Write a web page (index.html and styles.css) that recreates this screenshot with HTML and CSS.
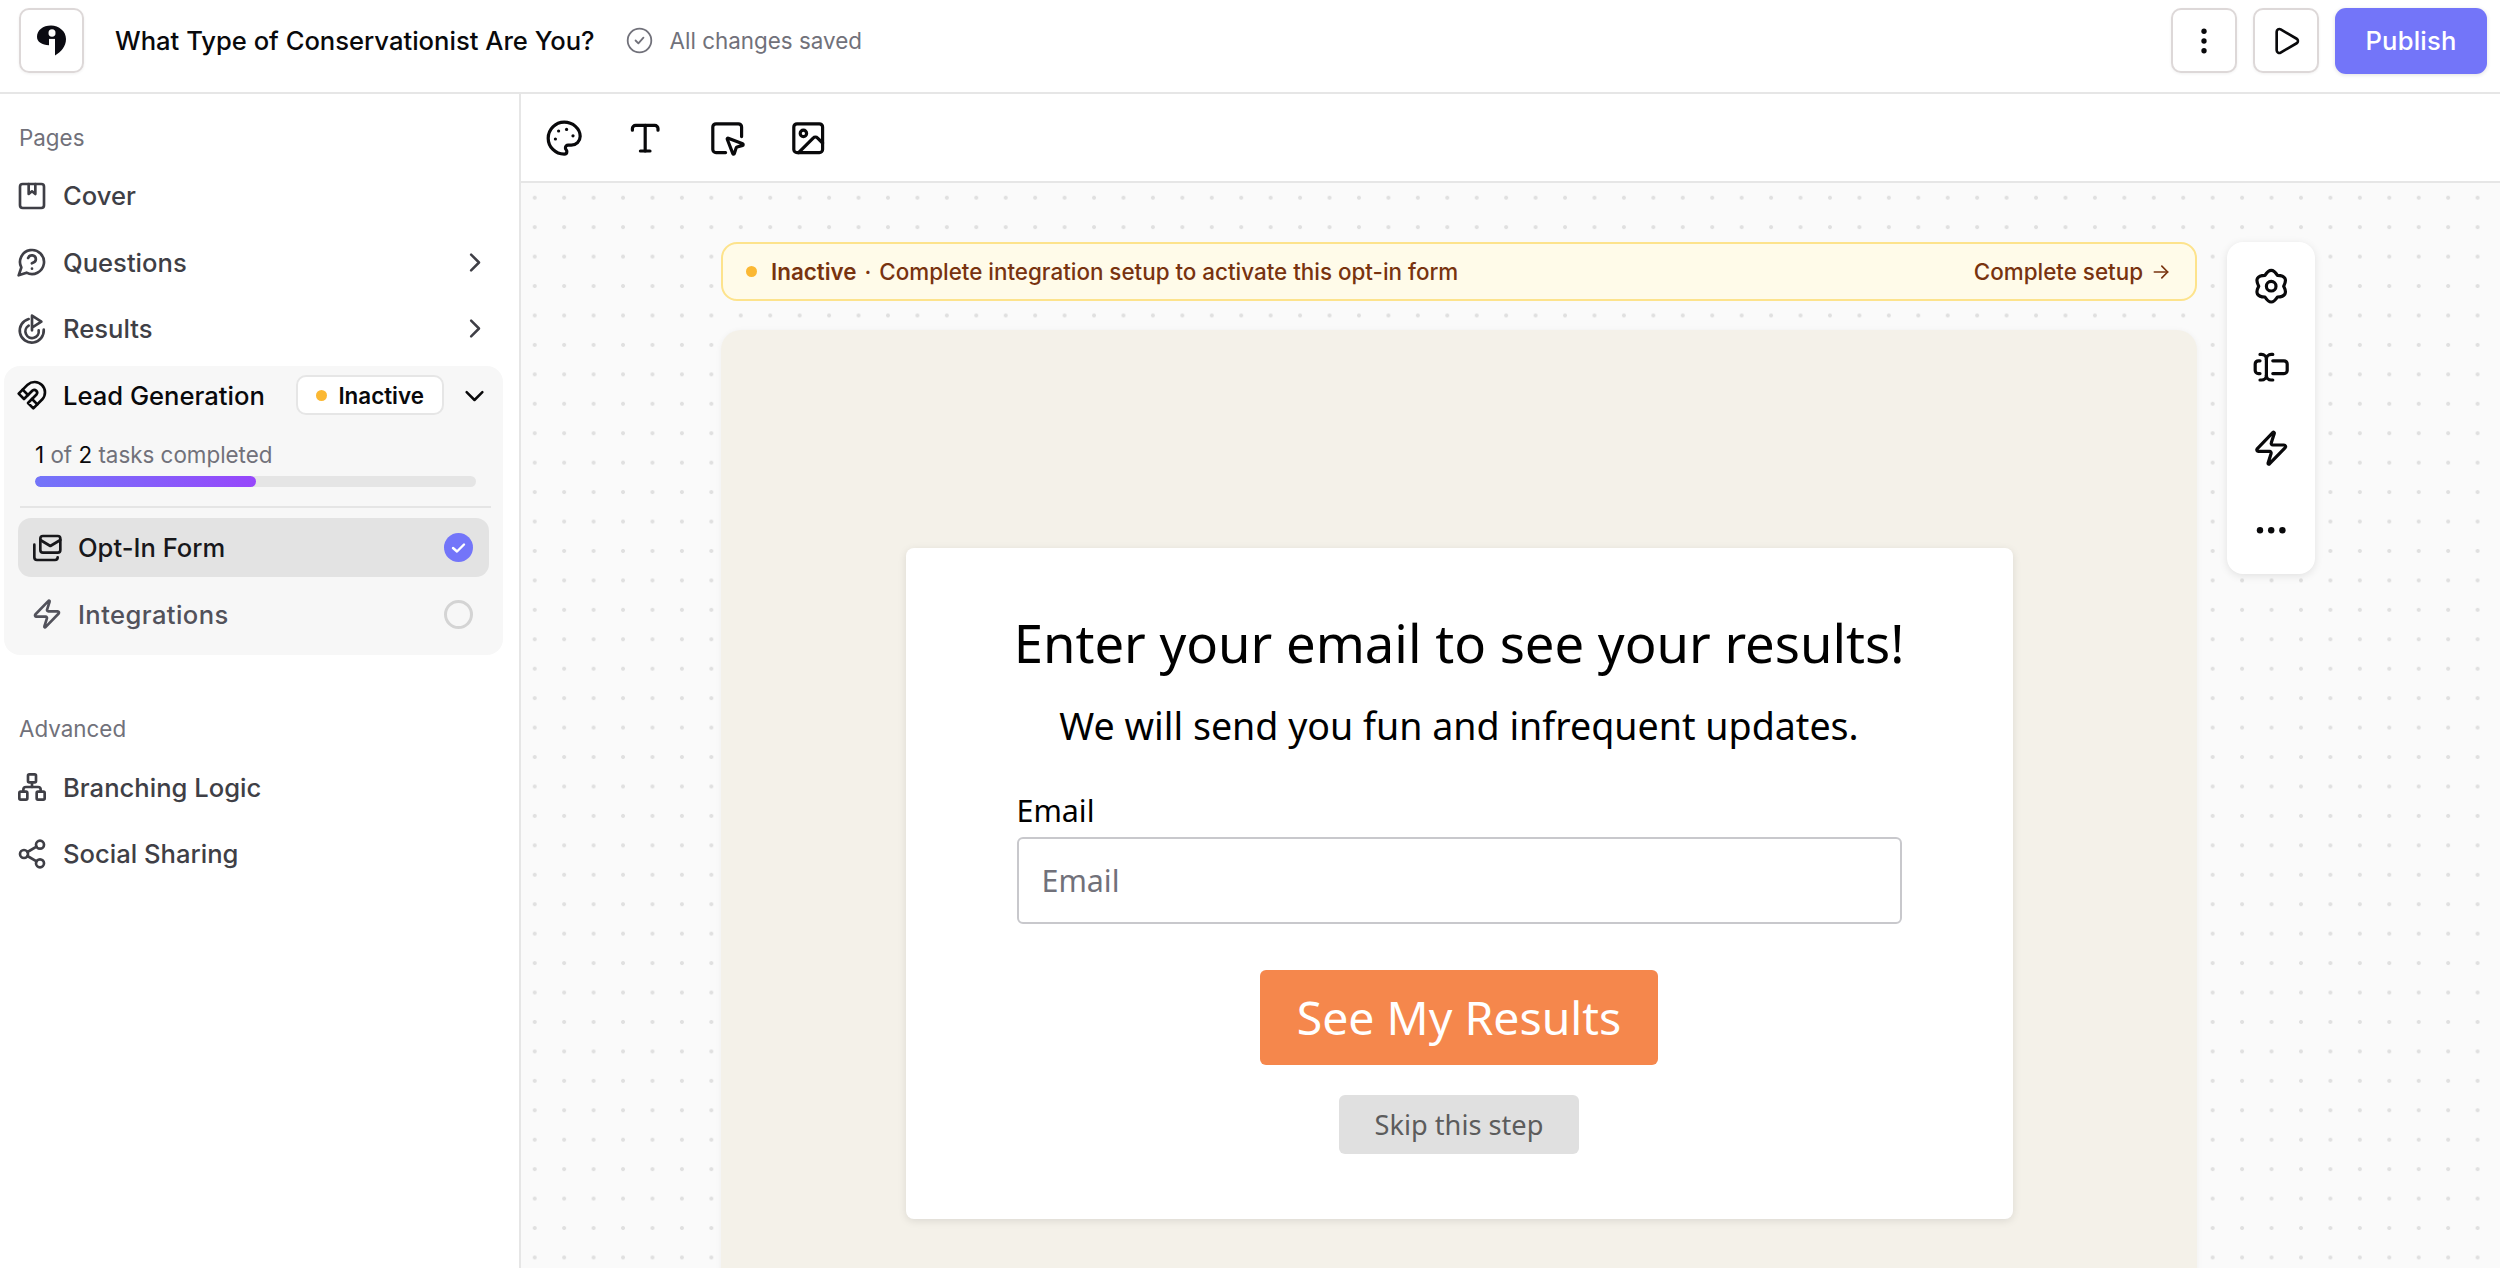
FILE: index.html
```html
<!DOCTYPE html>
<html lang="en">
<head>
    <meta charset="UTF-8">
    <title>What Type of Conservationist Are You?</title>
    <link rel="stylesheet" href="styles.css">
</head>
<body>
    <header class="topbar">
        <div class="logo-box">
            <svg class="logo" viewBox="0 0 29 29" preserveAspectRatio="none">
                <path class="logo-ink" d="M0 11C0 5 6 .5 14 .5S29 6 29 13c0 7-5 12-11 15.500V17h-6v2C5 18.500 0 16 0 11z"/>
                <circle class="logo-cut" cx="15" cy="7.500" r="3.500"/>
                <rect class="logo-cut" x="12" y="13" width="6" height="6"/>
            </svg>
        </div>
        <h1 class="quiz-title">What Type of Conservationist Are You?</h1>
        <svg class="saved-icon" viewBox="0 0 24 24"><circle cx="12" cy="12" r="10.500"/><path d="m8.500 12 2.500 2.500 4.500-5"/></svg>
        <span class="saved-text">All changes saved</span>
        <div class="top-actions">
            <button class="square-btn">
                <svg class="icon-md" viewBox="0 0 24 24"><circle cx="12" cy="4.700" r="2" class="solid"/><circle cx="12" cy="12" r="2" class="solid"/><circle cx="12" cy="19.300" r="2" class="solid"/></svg>
            </button>
            <button class="square-btn">
                <svg class="icon-md" viewBox="0 0 24 24"><path d="M5 5a2 2 0 0 1 3-1.700l12 7a2 2 0 0 1 0 3.400l-12 7a2 2 0 0 1-3-1.700z"/></svg>
            </button>
            <button class="publish-btn">Publish</button>
        </div>
    </header>

    <div class="workspace">
        <aside class="sidebar">
            <div class="side-label">Pages</div>
            <a class="side-row">
                <svg class="side-icon" viewBox="0 0 24 24"><rect x="3" y="3" width="18" height="18" rx="2"/><path d="M9.500 3v7.500l2.500-2 2.500 2V3"/></svg>
                <span>Cover</span>
            </a>
            <a class="side-row">
                <svg class="side-icon" viewBox="0 0 24 24"><path d="M7.900 20A9 9 0 1 0 4 16.100L2 22Z"/><path d="M9.090 9a3 3 0 0 1 5.830 1c0 2-3 3-3 3"/><path d="M12 17h.01"/></svg>
                <span>Questions</span>
                <svg class="chevron" viewBox="0 0 24 24"><path d="m9 5 7 7-7 7"/></svg>
            </a>
            <a class="side-row">
                <svg class="side-icon" viewBox="0 0 24 24"><path d="M9.500 4.500A9 9 0 1 0 20.800 12.500"/><path d="M9.500 9.500A5 5 0 1 0 17 13"/><path d="M12 13V2l7 4.500-7 4.500"/></svg>
                <span>Results</span>
                <svg class="chevron" viewBox="0 0 24 24"><path d="m9 5 7 7-7 7"/></svg>
            </a>

            <section class="lead-group">
                <div class="lead-head">
                    <svg class="side-icon" viewBox="0 0 24 24"><path d="m6 15-4-4 6.750-6.770a7.790 7.790 0 0 1 11 11L13 22l-4-4 6.390-6.360a2.140 2.140 0 0 0-3-3L6 15"/><path d="m5 8 4 4"/><path d="m12 15 4 4"/></svg>
                    <span class="lead-name">Lead Generation</span>
                    <span class="status-pill"><i class="amber-dot"></i>Inactive</span>
                    <svg class="chevron" viewBox="0 0 24 24"><path d="m5 9 7 7 7-7"/></svg>
                </div>
                <div class="tasks">
                    <div class="tasks-text"><b>1</b> of <b>2</b> tasks completed</div>
                    <div class="progress"><div class="progress-fill" style="width: 50%"></div></div>
                </div>
                <div class="group-rule"></div>
                <a class="sub-row sub-active">
                    <svg class="side-icon" viewBox="0 0 24 24"><rect x="7" y="3" width="15" height="12.500" rx="2"/><path d="m7 6 7.500 4.500L22 6"/><path d="M2.500 9.500V19a2 2 0 0 0 2 2H18a2 2 0 0 0 2-2"/></svg>
                    <span>Opt-In Form</span>
                    <svg class="check-done" viewBox="0 0 29 29"><circle cx="14.500" cy="14.500" r="14.500"/><path d="m9 15 4 3.500 7-7"/></svg>
                </a>
                <a class="sub-row sub-idle">
                    <svg class="side-icon" viewBox="0 0 24 24"><path d="M4 14a1 1 0 0 1-.78-1.630l9.900-10.200a.5.5 0 0 1 .86.46l-1.920 6.020A1 1 0 0 0 13 10h7a1 1 0 0 1 .78 1.630l-9.900 10.200a.5.5 0 0 1-.86-.46l1.920-6.020A1 1 0 0 0 11 14z"/></svg>
                    <span>Integrations</span>
                    <i class="check-empty"></i>
                </a>
            </section>

            <div class="side-label advanced">Advanced</div>
            <a class="side-row">
                <svg class="side-icon" viewBox="0 0 24 24"><rect x="9" y="2.500" width="6" height="6" rx="1"/><rect x="2.500" y="15.500" width="6" height="6" rx="1"/><rect x="15.500" y="15.500" width="6" height="6" rx="1"/><path d="M5.500 15.500V14a2 2 0 0 1 2-2h9a2 2 0 0 1 2 2v1.500"/><path d="M12 8.500V12"/></svg>
                <span>Branching Logic</span>
            </a>
            <a class="side-row">
                <svg class="side-icon" viewBox="0 0 24 24"><circle cx="18" cy="5" r="3"/><circle cx="6" cy="12" r="3"/><circle cx="18" cy="19" r="3"/><path d="m8.590 13.510 6.830 3.980"/><path d="m15.410 6.510-6.820 3.980"/></svg>
                <span>Social Sharing</span>
            </a>
        </aside>

        <main class="editor">
            <div class="toolbar">
                <svg class="tool-icon" viewBox="0 0 24 24"><circle cx="13.500" cy="6.500" r="1" class="solid"/><circle cx="17.500" cy="10.500" r="1" class="solid"/><circle cx="8.500" cy="7.500" r="1" class="solid"/><circle cx="6.500" cy="12.500" r="1" class="solid"/><path d="M12 2C6.500 2 2 6.500 2 12s4.500 10 10 10c.926 0 1.648-.746 1.648-1.688 0-.437-.18-.835-.437-1.125-.29-.289-.438-.652-.438-1.125a1.640 1.640 0 0 1 1.668-1.668h1.996c3.051 0 5.555-2.503 5.555-5.554C21.965 6.012 17.461 2 12 2z"/></svg>
                <svg class="tool-icon" viewBox="0 0 24 24"><path d="M4 7V6a2 2 0 0 1 2-2h12a2 2 0 0 1 2 2v1"/><path d="M12 4v16"/><path d="M9 20h6"/></svg>
                <svg class="tool-icon" viewBox="0 0 24 24"><path d="M12.034 12.681a.498.498 0 0 1 .647-.647l9 3.500a.5.5 0 0 1-.033.943l-3.444 1.068a1 1 0 0 0-.66.66l-1.067 3.443a.5.5 0 0 1-.943.033z"/><path d="M21 11V5a2 2 0 0 0-2-2H5a2 2 0 0 0-2 2v14a2 2 0 0 0 2 2h6"/></svg>
                <svg class="tool-icon" viewBox="0 0 24 24"><rect x="3" y="3" width="18" height="18" rx="2"/><circle cx="9" cy="9" r="2"/><path d="m21 15-3.086-3.086a2 2 0 0 0-2.828 0L6 21"/></svg>
            </div>

            <div class="canvas">
                <div class="canvas-col">
                    <div class="banner">
                        <i class="amber-dot"></i>
                        <span class="banner-text"><b>Inactive</b><i class="sep">·</i>Complete integration setup to activate this opt-in form</span>
                        <a class="banner-link">Complete setup
                            <svg class="banner-arrow" viewBox="0 0 24 24"><path d="M4 12h16"/><path d="m13 5 7 7-7 7"/></svg>
                        </a>
                    </div>
                    <div class="preview">
                        <div class="form-card">
                            <h2 class="form-title">Enter your email to see your results!</h2>
                            <p class="form-sub">We will send you fun and infrequent updates.</p>
                            <label class="form-label" for="email">Email</label>
                            <input class="form-input" id="email" type="email" placeholder="Email">
                            <button class="results-btn">See My Results</button>
                            <button class="skip-btn">Skip this step</button>
                        </div>
                    </div>
                </div>

                <div class="side-tools">
                    <svg class="tool-icon" viewBox="0 0 24 24"><path d="M8.100 5.250Q12-1 15.900 5.250Q23.260 5.500 19.800 12Q23.260 18.500 15.900 18.750Q12 25 8.100 18.750Q.74 18.500 4.200 12Q.74 5.500 8.100 5.250z"/><circle cx="12" cy="12" r="3"/></svg>
                    <svg class="tool-icon" viewBox="0 0 24 24"><path d="M5 4h1a3 3 0 0 1 3 3 3 3 0 0 1 3-3h1"/><path d="M13 20h-1a3 3 0 0 1-3-3 3 3 0 0 1-3 3H5"/><path d="M5 16H4a2 2 0 0 1-2-2v-4a2 2 0 0 1 2-2h1"/><path d="M13 8h7a2 2 0 0 1 2 2v4a2 2 0 0 1-2 2h-7"/><path d="M9 7v10"/></svg>
                    <svg class="tool-icon" viewBox="0 0 24 24"><path d="M4 14a1 1 0 0 1-.78-1.630l9.900-10.200a.5.5 0 0 1 .86.46l-1.920 6.020A1 1 0 0 0 13 10h7a1 1 0 0 1 .78 1.630l-9.900 10.200a.5.5 0 0 1-.86-.46l1.920-6.020A1 1 0 0 0 11 14z"/></svg>
                    <svg class="tool-icon" viewBox="0 0 24 24"><circle cx="5" cy="12" r="2" class="solid"/><circle cx="12" cy="12" r="2" class="solid"/><circle cx="19" cy="12" r="2" class="solid"/></svg>
                </div>
            </div>
        </main>
    </div>
</body>
</html>
```
FILE: styles.css
```css
* {
    box-sizing: border-box;
}

html, body {
    height: 100%;
}

body {
    margin: 0;
    font-family: Inter, "Liberation Sans", sans-serif;
    background: white;
    color: #09090b;
    overflow: hidden;
}

svg {
    fill: none;
    stroke: currentColor;
    stroke-width: 2;
    stroke-linecap: round;
    stroke-linejoin: round;
    flex-shrink: 0;
}

svg .solid {
    fill: currentColor;
    stroke: none;
}

/* top bar */
.topbar {
    display: flex;
    align-items: center;
    height: 94px;
    padding: 0 13px 11px 19px;
    border-bottom: 2px solid #e6e6e6;
}

.logo-box {
    display: flex;
    align-items: center;
    justify-content: center;
    width: 65px;
    height: 65px;
    border: 2px solid #ddd8d8;
    border-radius: 10px;
    box-shadow: 0 1px 3px rgba(0, 0, 0, 0.06);
}

.logo {
    width: 29px;
    height: 31px;
    stroke: none;
}

.logo-ink {
    fill: #0b0b12;
}

.logo-cut {
    fill: white;
}

.quiz-title {
    margin: 0 31px;
    font-size: 25.6px;
    font-weight: 500;
    white-space: nowrap;
}

.saved-icon {
    width: 27px;
    height: 27px;
    color: #71717a;
    stroke-width: 1.6;
}

.saved-text {
    margin-left: 17px;
    font-size: 22.4px;
    color: #71717a;
}

.top-actions {
    display: flex;
    align-items: center;
    gap: 16px;
    margin-left: auto;
}

.square-btn {
    display: flex;
    align-items: center;
    justify-content: center;
    width: 66px;
    height: 65px;
    padding: 0;
    border: 2px solid #ddd8d8;
    border-radius: 10px;
    background: white;
    color: #09090b;
    box-shadow: 0 1px 3px rgba(0, 0, 0, 0.06);
}

.icon-md {
    width: 32px;
    height: 32px;
}

.publish-btn {
    width: 152px;
    height: 66px;
    border: none;
    border-radius: 11px;
    background: #7375f9;
    color: white;
    font-family: inherit;
    font-size: 25.6px;
    font-weight: 500;
    letter-spacing: 0.2px;
    box-shadow: 0 1px 4px rgba(0, 0, 0, 0.12);
}

.workspace {
    display: flex;
    height: calc(100% - 94px);
}

/* left column */
.sidebar {
    width: 521px;
    flex-shrink: 0;
    padding-top: 28.5px;
    border-right: 2px solid #e6e6e6;
}

.side-label {
    height: 30px;
    margin-bottom: 10px;
    padding-left: 19px;
    font-size: 22.4px;
    line-height: 30px;
    color: #71717a;
}

.side-label.advanced {
    margin-top: 59px;
}

.side-row {
    display: flex;
    align-items: center;
    height: 66.5px;
    padding: 0 31px 0 16px;
    font-size: 25.6px;
    font-weight: 500;
    color: #3f3f46;
}

.side-row span {
    margin-left: 15px;
}

.side-icon {
    width: 32px;
    height: 32px;
}

.chevron {
    width: 27px;
    height: 27px;
    margin-left: auto;
    stroke-width: 2.2;
}

.lead-group {
    width: 499px;
    height: 289px;
    margin: 4px 0 0 4px;
    border-radius: 16px;
    background: #f7f7f7;
}

.lead-head {
    display: flex;
    align-items: center;
    height: 58px;
    padding: 0 15px 0 12px;
    color: #09090b;
}

.lead-name {
    margin-left: 15px;
    font-size: 25.6px;
    font-weight: 500;
}

.status-pill {
    display: flex;
    align-items: center;
    width: 148px;
    height: 40px;
    margin-left: 31.5px;
    padding-left: 17.5px;
    border: 2px solid #e6e6e6;
    border-radius: 10px;
    background: white;
    font-size: 22.4px;
    font-weight: 600;
}

.amber-dot {
    display: block;
    width: 11px;
    height: 11px;
    border-radius: 50%;
    background: #fbb833;
    flex-shrink: 0;
}

.status-pill .amber-dot {
    margin-right: 11.5px;
}

.lead-head .chevron {
    margin-left: 16.5px;
}

.tasks {
    padding: 17px 27px 0 31px;
}

.tasks-text {
    height: 28px;
    font-size: 22.4px;
    line-height: 28px;
    color: #71717a;
}

.tasks-text b {
    font-weight: 400;
    color: #09090b;
}

.progress {
    height: 11px;
    margin-top: 7px;
    border-radius: 6px;
    background: #e5e5e5;
    overflow: hidden;
}

.progress-fill {
    height: 100%;
    border-radius: 6px;
    background: linear-gradient(90deg, #7375f9, #9747fb);
}

.group-rule {
    height: 2px;
    margin: 18.5px 12px 10.5px 16px;
    background: #e5e5e5;
}

.sub-row {
    display: flex;
    align-items: center;
    height: 59px;
    margin: 0 14px 7.5px;
    padding: 0 16px 0 13px;
    border-radius: 13px;
    font-size: 25.6px;
    font-weight: 500;
    color: #52525b;
}

.sub-row span {
    margin-left: 15px;
}

.sub-active {
    background: #e3e3e3;
    color: #18181b;
}

.sub-idle {
    letter-spacing: 0.4px;
}

.check-done {
    width: 29px;
    height: 29px;
    margin-left: auto;
    stroke: white;
    stroke-width: 2.4;
}

.check-done circle {
    fill: #7375f9;
    stroke: none;
}

.check-empty {
    display: block;
    width: 29px;
    height: 29px;
    margin-left: auto;
    border: 3px solid #d4d4d4;
    border-radius: 50%;
}

/* editor */
.editor {
    flex: 1;
    display: flex;
    flex-direction: column;
    min-width: 0;
}

.toolbar {
    display: flex;
    align-items: center;
    gap: 43px;
    height: 89px;
    padding: 2px 0 0 24px;
    border-bottom: 2px solid #e6e6e6;
    flex-shrink: 0;
}

.tool-icon {
    width: 38.4px;
    height: 38.4px;
    color: #09090b;
}

.canvas {
    flex: 1;
    display: flex;
    align-items: flex-start;
    gap: 30px;
    padding: 59px 0 0 200px;
    overflow: hidden;
    background-color: #fafafa;
    background-image: radial-gradient(circle, #e0e0e0 1.8px, transparent 2.2px);
    background-size: 29.45px 29.45px;
    background-position: -1px 0;
}

.canvas-col {
    width: 1476px;
    flex-shrink: 0;
}

.banner {
    display: flex;
    align-items: center;
    height: 59px;
    padding: 0 24px 0 23px;
    border: 2px solid #fde38c;
    border-radius: 16px;
    background: #fffbe9;
    color: #78330f;
    font-size: 22.4px;
    font-weight: 500;
}

.banner-text {
    margin-left: 14px;
}

.banner-text b {
    font-weight: 600;
}

.sep {
    margin: 0 8px;
    font-style: normal;
}

.banner-link {
    display: flex;
    align-items: center;
    gap: 8px;
    margin-left: auto;
}

.banner-arrow {
    width: 20px;
    height: 20px;
}

.preview {
    height: 1000px;
    margin-top: 29px;
    padding-top: 218px;
    border-radius: 20px;
    background: #f4f1e9;
    box-shadow: 0 1px 6px rgba(0, 0, 0, 0.05);
}

.form-card {
    display: flex;
    flex-direction: column;
    align-items: center;
    width: 1107px;
    height: 671px;
    margin: 0 auto;
    padding: 65px 111px 0;
    border-radius: 8px;
    background: white;
    box-shadow: 0 2px 8px rgba(0, 0, 0, 0.1);
    font-family: "Noto Sans", sans-serif;
}

.form-title {
    margin: 0;
    font-size: 52.6px;
    font-weight: 400;
    line-height: 60px;
    white-space: nowrap;
    color: black;
}

.form-sub {
    margin: 29.5px 0 0;
    font-size: 37.6px;
    line-height: 46px;
    white-space: nowrap;
    color: black;
}

.form-label {
    align-self: flex-start;
    height: 36px;
    margin-top: 44px;
    font-size: 30.4px;
    line-height: 36px;
    color: black;
}

.form-input {
    width: 100%;
    height: 87px;
    margin-top: 8px;
    padding: 0 23px;
    border: 2px solid #c8c8cc;
    border-radius: 6px;
    background: white;
    font-family: inherit;
    font-size: 30.4px;
}

.form-input::placeholder {
    color: #71717a;
    opacity: 1;
}

.results-btn {
    width: 398px;
    height: 95px;
    margin-top: 46px;
    border: none;
    border-radius: 6px;
    background: #f5874c;
    color: white;
    font-family: inherit;
    font-size: 46.4px;
}

.skip-btn {
    width: 240px;
    height: 59px;
    margin-top: 30px;
    border: none;
    border-radius: 6px;
    background: #e0e0e0;
    color: #5c5c5c;
    font-family: inherit;
    font-size: 27.2px;
}

.side-tools {
    display: flex;
    flex-direction: column;
    align-items: center;
    justify-content: space-between;
    width: 88px;
    height: 332px;
    padding: 25px 0;
    border-radius: 16px;
    background: white;
    box-shadow: 0 2px 8px rgba(0, 0, 0, 0.1);
    flex-shrink: 0;
}
```
